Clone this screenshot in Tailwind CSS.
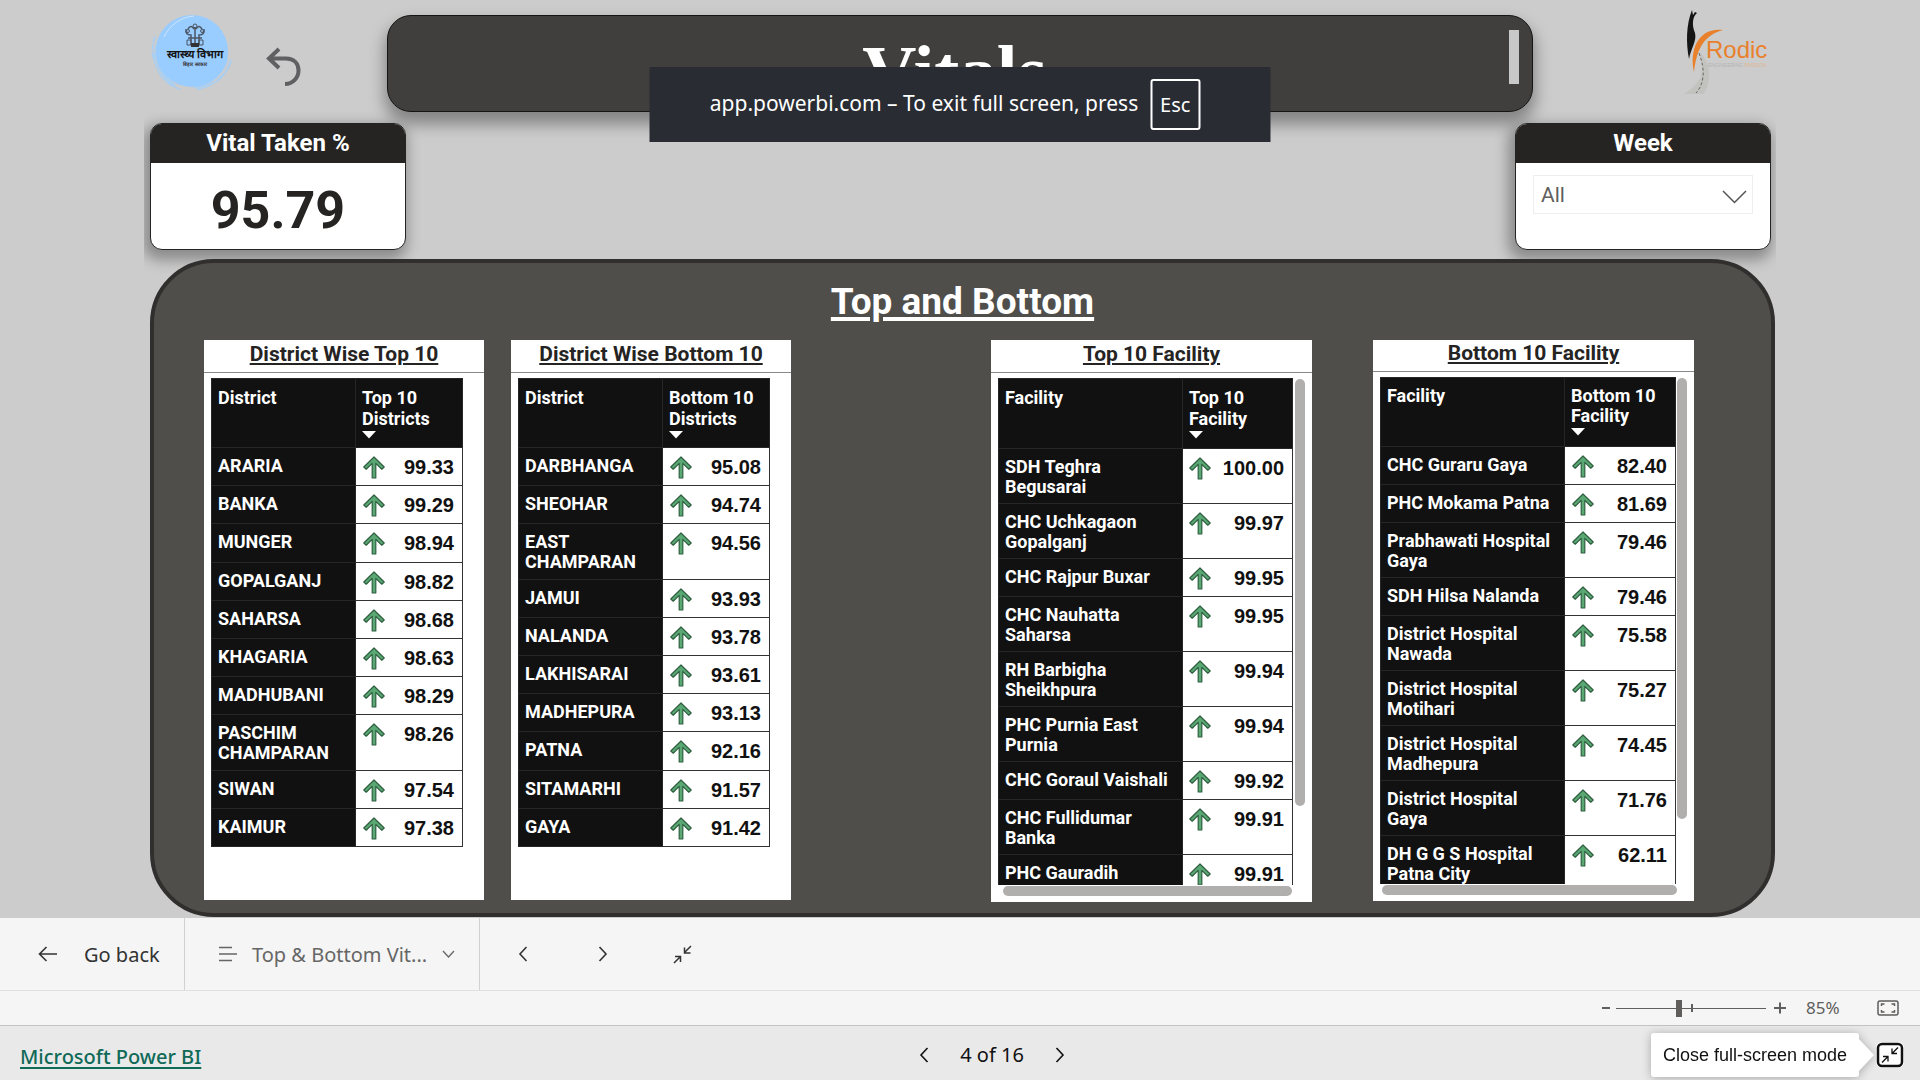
<!DOCTYPE html>
<html lang="en">
<head>
<meta charset="utf-8">
<meta name="viewport" content="width=device-width, initial-scale=1">
<title>Vitals - Microsoft Power BI</title>
<script src="https://cdn.jsdelivr.net/npm/@tailwindcss/browser@4"></script>
</head>
<body class="flex min-h-screen flex-col bg-[#cccccc] font-['Roboto',sans-serif] text-[#252423]">

<!-- shared icons -->
<svg class="hidden" aria-hidden="true">
  <symbol id="up" viewBox="0 0 22 23">
    <path d="M11 1 21.200 11 18.800 13.200 12.800 7.400V22H9.200V7.400L3.200 13.200 0.800 11Z" fill="#5aa873" stroke="#2f5f40" stroke-width="1.200" stroke-linejoin="round"/>
  </symbol>
  <symbol id="sort" viewBox="0 0 14 8"><path d="M0 0H14L7 7.500Z" fill="#fff"/></symbol>
  <symbol id="prev" viewBox="0 0 10 16"><path d="M8.500 1 2 8l6.500 7" fill="none" stroke="currentColor" stroke-width="1.600"/></symbol>
  <symbol id="next" viewBox="0 0 10 16"><path d="M1.500 1 8 8l-6.500 7" fill="none" stroke="currentColor" stroke-width="1.600"/></symbol>
</svg>

<!-- full-screen notice -->
<div role="status" class="absolute top-[67px] left-1/2 z-20 flex h-[75px] w-[621px] -translate-x-1/2 items-center justify-center gap-3 bg-[#292c33] pr-[10px] font-['Noto_Sans',sans-serif] text-[21px] text-white">
  <span class="pb-0.5 whitespace-nowrap">app.powerbi.com – To exit full screen, press</span>
  <kbd class="flex h-[51px] w-[50px] items-center justify-center rounded-[3px] border-2 border-white font-['Noto_Sans',sans-serif] text-[20px]">Esc</kbd>
</div>

<main class="mx-auto flex w-[85%] flex-1 flex-col overflow-hidden pb-px">
  <header class="flex pt-[15px]">
    <div class="flex w-[243px] shrink-0 pl-1.5">
      <svg class="-mt-1 h-[84px] w-[84px] shrink-0" viewBox="0 0 84 84" role="img" aria-label="स्वास्थ्य विभाग बिहार सरकार">
        <g fill="none" stroke="#a9cff2" stroke-linecap="round">
          <path d="M8 30C-1 50 9 72 30 78" stroke-width="1.500" stroke-dasharray="9 2"/>
          <path d="M12 22C1 44 9 64 24 74" stroke-width="3" stroke-dasharray="14 2"/>
          <path d="M5 26C2 34 2 42 4 50" stroke-width="2" stroke-dasharray="5 3"/>
          <path d="M81 50C76 64 66 74 48 78" stroke-width="2" stroke-dasharray="12 2"/>
          <path d="M77 48C72 62 62 72 46 76" stroke-width="3"/>
        </g>
        <circle cx="42" cy="40" r="36" fill="#99ccff"/>
        <path d="M14 26C20 13 32 6 44 5" fill="none" stroke="#cfe6fb"/>
        <g fill="none" stroke="#4b5563">
          <path d="M45 36V16M41 34V24q-6 0-5-6M49 34V24q6 0 5-6M38 18q3-5 6 0M46 18q3-5 6 0M38 27h14" stroke-width="1.500"/>
          <circle cx="45" cy="15" r="2"/><circle cx="38" cy="20" r="1.500"/><circle cx="52" cy="20" r="1.500"/>
          <path d="M37 29h4v5h-4zM49 29h4v5h-4z"/>
        </g>
        <path d="M41 32h8v4h-8z" fill="#333"/>
        <text x="45" y="47" text-anchor="middle" font-size="11" font-weight="700" fill="#111">स्वास्थ्य विभाग</text>
        <text x="45" y="55" text-anchor="middle" font-size="5" font-weight="700" fill="#333">बिहार सरकार</text>
      </svg>
      <button type="button" aria-label="Back" class="mt-8 ml-8 h-[40px] w-[36px] text-[#605f61]">
        <svg viewBox="0 0 36 40" class="h-[40px] w-[36px]" fill="none" stroke="currentColor" stroke-width="4"><path d="M13 2 3 11.500 13 21M3 11.500H20c8 0 12.500 5 12.500 12S27 37 19 37"/></svg>
      </button>
    </div>
    <div class="flex h-[97px] flex-1 items-start justify-center rounded-[24px] border border-[#151515] bg-[#403f3d] pt-[14px] pr-[13px] shadow-[0_10px_16px_2px_rgba(0,0,0,0.360)]">
      <h1 class="flex-1 pt-1 pl-[12px] text-center font-['Liberation_Serif',serif] text-[75px] leading-[76px] font-bold text-white">Vitals</h1>
      <div class="h-[54px] w-[10px] bg-[#c8c8c8]"></div>
    </div>
    <div class="w-[243px] shrink-0 pl-[150px]">
      <svg class="-mt-1.5 h-[88px] w-[90px]" viewBox="0 0 90 88" role="img" aria-label="Rodic">
        <path d="M9 1C3 16 3 34 6 50 8 39 14 32 12 24 9 17 9 8 14 4L12 3 10 6Z" fill="#151515"/>
        <path d="M11 63C6 40 16 18 40 21 22 26 14 38 11 63Z" fill="#e9802c"/>
        <path d="M15 42C26 62 16 76 1 85H21C31 66 25 50 15 42Z" fill="#c2c2be"/>
        <path d="M16 44C22 60 22 74 13 84" fill="none" stroke="#666" stroke-dasharray="3 2"/>
        <text x="23" y="49" font-family="Liberation Sans" font-size="24" fill="#e9802c">Rodic</text>
        <text x="25" y="58" font-family="Liberation Sans" font-size="5" fill="#b4b4b4">ENGINEERING <tspan fill="#dfb592">PASSION</tspan></text>
      </svg>
    </div>
  </header>

  <div class="flex justify-between pt-[11px] pr-[5px] pl-[6px]">
    <section class="h-[127px] w-[256px] overflow-hidden rounded-[12px] border border-[#252423] bg-white text-center shadow-[-3px_6px_14px_4px_rgba(0,0,0,0.320)]">
      <h2 class="h-[39px] bg-[#252423] text-[24px] leading-[38px] font-bold text-white">Vital Taken %</h2>
      <p class="pt-[12px] text-[52px] leading-[72px] font-bold">95.79</p>
    </section>
    <section class="h-[127px] w-[256px] overflow-hidden rounded-[12px] border border-[#252423] bg-white text-center shadow-[-3px_6px_14px_4px_rgba(0,0,0,0.320)]">
      <h2 class="h-[39px] bg-[#252423] text-[24px] leading-[38px] font-bold text-white"><label for="week">Week</label></h2>
      <div class="relative mx-[17px] mt-3">
        <select id="week" class="h-[39px] w-full appearance-none border border-[#eeeeee] bg-white pt-0.5 pl-[7px] text-[21px] text-[#605e5c]"><option>All</option></select>
        <svg class="pointer-events-none absolute top-[15px] right-[6px] h-[14px] w-[25px]" viewBox="0 0 25 14" fill="none" stroke="#555" stroke-width="1.500"><path d="M1 1 12.500 12.500 24 1"/></svg>
      </div>
    </section>
  </div>

  <section class="mt-[9px] mr-px ml-[6px] flex-1 rounded-[64px] border-4 border-[#302f2e] bg-[#4f4e4b] pb-[11px]">
    <h2 class="pt-[15px] text-center text-[37px] leading-[48px] font-bold text-white underline decoration-[4px] underline-offset-[3px]">Top and Bottom</h2>
    <div class="flex justify-between pt-[14px] pr-[77px] pl-[50px]">

      <div class="flex gap-[27px]">
        <section class="h-[560px] w-[280px] bg-white">
          <h3 class="h-[33px] border-b border-[#888] text-center text-[21px] leading-[28px] font-bold underline decoration-2 underline-offset-2">District Wise Top 10</h3>
          <table class="mt-[5px] ml-[7px] h-[469px] w-[252px] table-fixed border-collapse text-[18px] leading-[20px] [&_tbody_tr]:h-[38px] [&_td]:border [&_td]:border-[#333] [&_td]:pt-2 [&_td]:pr-2 [&_td]:pl-[7px] [&_td]:align-top [&_th]:border [&_th]:border-[#262626] [&_th]:bg-[#111] [&_th]:px-[6px] [&_th]:pt-2 [&_th]:pb-1.5 [&_th]:text-left [&_th]:align-top [&_th]:font-bold [&_th]:text-white [&_td>div]:flex [&_td>div]:justify-between [&_td>div]:font-['Liberation_Sans',sans-serif] [&_td>div]:text-[20px] [&_td>div]:leading-[22px] [&_td>div]:font-bold [&_td>div]:text-[#111] [&_td_svg]:h-[23px] [&_td_svg]:w-[22px]">
            <thead><tr class="h-[69px] leading-[21px]"><th scope="col" class="w-[144px]">District</th><th scope="col" aria-sort="descending">Top 10 Districts<svg class="mt-0.5 h-2 w-[14px]"><use href="#sort"/></svg></th></tr></thead>
            <tbody>
              <tr><th scope="row">ARARIA</th><td><div><svg><use href="#up"/></svg>99.33</div></td></tr>
              <tr><th scope="row">BANKA</th><td><div><svg><use href="#up"/></svg>99.29</div></td></tr>
              <tr><th scope="row">MUNGER</th><td><div><svg><use href="#up"/></svg>98.94</div></td></tr>
              <tr><th scope="row">GOPALGANJ</th><td><div><svg><use href="#up"/></svg>98.82</div></td></tr>
              <tr><th scope="row">SAHARSA</th><td><div><svg><use href="#up"/></svg>98.68</div></td></tr>
              <tr><th scope="row">KHAGARIA</th><td><div><svg><use href="#up"/></svg>98.63</div></td></tr>
              <tr><th scope="row">MADHUBANI</th><td><div><svg><use href="#up"/></svg>98.29</div></td></tr>
              <tr><th scope="row">PASCHIM CHAMPARAN</th><td><div><svg><use href="#up"/></svg>98.26</div></td></tr>
              <tr><th scope="row">SIWAN</th><td><div><svg><use href="#up"/></svg>97.54</div></td></tr>
              <tr><th scope="row">KAIMUR</th><td><div><svg><use href="#up"/></svg>97.38</div></td></tr>
            </tbody>
          </table>
        </section>

        <section class="h-[560px] w-[280px] bg-white">
          <h3 class="h-[33px] border-b border-[#888] text-center text-[21px] leading-[28px] font-bold underline decoration-2 underline-offset-2">District Wise Bottom 10</h3>
          <table class="mt-[5px] ml-[7px] h-[469px] w-[252px] table-fixed border-collapse text-[18px] leading-[20px] [&_tbody_tr]:h-[38px] [&_td]:border [&_td]:border-[#333] [&_td]:pt-2 [&_td]:pr-2 [&_td]:pl-[7px] [&_td]:align-top [&_th]:border [&_th]:border-[#262626] [&_th]:bg-[#111] [&_th]:px-[6px] [&_th]:pt-2 [&_th]:pb-1.5 [&_th]:text-left [&_th]:align-top [&_th]:font-bold [&_th]:text-white [&_td>div]:flex [&_td>div]:justify-between [&_td>div]:font-['Liberation_Sans',sans-serif] [&_td>div]:text-[20px] [&_td>div]:leading-[22px] [&_td>div]:font-bold [&_td>div]:text-[#111] [&_td_svg]:h-[23px] [&_td_svg]:w-[22px]">
            <thead><tr class="h-[69px] leading-[21px]"><th scope="col" class="w-[144px]">District</th><th scope="col" aria-sort="descending">Bottom 10 Districts<svg class="mt-0.5 h-2 w-[14px]"><use href="#sort"/></svg></th></tr></thead>
            <tbody>
              <tr><th scope="row">DARBHANGA</th><td><div><svg><use href="#up"/></svg>95.08</div></td></tr>
              <tr><th scope="row">SHEOHAR</th><td><div><svg><use href="#up"/></svg>94.74</div></td></tr>
              <tr><th scope="row">EAST CHAMPARAN</th><td><div><svg><use href="#up"/></svg>94.56</div></td></tr>
              <tr><th scope="row">JAMUI</th><td><div><svg><use href="#up"/></svg>93.93</div></td></tr>
              <tr><th scope="row">NALANDA</th><td><div><svg><use href="#up"/></svg>93.78</div></td></tr>
              <tr><th scope="row">LAKHISARAI</th><td><div><svg><use href="#up"/></svg>93.61</div></td></tr>
              <tr><th scope="row">MADHEPURA</th><td><div><svg><use href="#up"/></svg>93.13</div></td></tr>
              <tr><th scope="row">PATNA</th><td><div><svg><use href="#up"/></svg>92.16</div></td></tr>
              <tr><th scope="row">SITAMARHI</th><td><div><svg><use href="#up"/></svg>91.57</div></td></tr>
              <tr><th scope="row">GAYA</th><td><div><svg><use href="#up"/></svg>91.42</div></td></tr>
            </tbody>
          </table>
        </section>
      </div>

      <div class="flex gap-[61px]">
        <section class="h-[562px] w-[321px] bg-white">
          <h3 class="h-[33px] border-b border-[#888] text-center text-[21px] leading-[28px] font-bold underline decoration-2 underline-offset-2">Top 10 Facility</h3>
          <div class="mt-[5px] ml-[7px] flex gap-0.5">
            <div class="h-[507px] w-[295px] overflow-hidden">
              <table class="w-full table-fixed border-collapse text-[18px] leading-[20px] [&_tbody_tr]:h-[38px] [&_td]:border [&_td]:border-[#333] [&_td]:pt-2 [&_td]:pr-2 [&_td]:pl-[6px] [&_td]:align-top [&_th]:border [&_th]:border-[#262626] [&_th]:bg-[#111] [&_th]:pr-1 [&_th]:pl-[6px] [&_th]:pt-2 [&_th]:pb-1.5 [&_th]:text-left [&_th]:align-top [&_th]:font-bold [&_th]:text-white [&_td>div]:flex [&_td>div]:justify-between [&_td>div]:font-['Liberation_Sans',sans-serif] [&_td>div]:text-[20px] [&_td>div]:leading-[22px] [&_td>div]:font-bold [&_td>div]:text-[#111] [&_td_svg]:h-[23px] [&_td_svg]:w-[22px]">
                <thead><tr class="h-[70px] leading-[21px]"><th scope="col" class="w-[184px]">Facility</th><th scope="col" aria-sort="descending">Top 10<br>Facility<svg class="mt-0.5 h-2 w-[14px]"><use href="#sort"/></svg></th></tr></thead>
                <tbody>
                  <tr><th scope="row">SDH Teghra<br>Begusarai</th><td><div><svg><use href="#up"/></svg>100.00</div></td></tr>
                  <tr><th scope="row">CHC Uchkagaon<br>Gopalganj</th><td><div><svg><use href="#up"/></svg>99.97</div></td></tr>
                  <tr><th scope="row">CHC Rajpur Buxar</th><td><div><svg><use href="#up"/></svg>99.95</div></td></tr>
                  <tr><th scope="row">CHC Nauhatta<br>Saharsa</th><td><div><svg><use href="#up"/></svg>99.95</div></td></tr>
                  <tr><th scope="row">RH Barbigha<br>Sheikhpura</th><td><div><svg><use href="#up"/></svg>99.94</div></td></tr>
                  <tr><th scope="row">PHC Purnia East<br>Purnia</th><td><div><svg><use href="#up"/></svg>99.94</div></td></tr>
                  <tr><th scope="row">CHC Goraul Vaishali</th><td><div><svg><use href="#up"/></svg>99.92</div></td></tr>
                  <tr><th scope="row">CHC Fullidumar<br>Banka</th><td><div><svg><use href="#up"/></svg>99.91</div></td></tr>
                  <tr><th scope="row">PHC Gauradih<br>Bhagalpur</th><td><div><svg><use href="#up"/></svg>99.91</div></td></tr>
                </tbody>
              </table>
            </div>
            <div class="mt-px h-[427px] w-[10px] rounded-full bg-[#b0afad]"></div>
          </div>
          <div class="mt-px ml-[12px] h-[10px] w-[289px] rounded-full bg-[#b0afad]"></div>
        </section>

        <section class="h-[561px] w-[321px] bg-white">
          <h3 class="h-[32px] border-b border-[#888] text-center text-[21px] leading-[26px] font-bold underline decoration-2 underline-offset-2">Bottom 10 Facility</h3>
          <div class="mt-[5px] ml-[7px] flex gap-px">
            <div class="h-[507px] w-[296px] overflow-hidden">
              <table class="w-full table-fixed border-collapse text-[18px] leading-[20px] [&_tbody_tr]:h-[38px] [&_td]:border [&_td]:border-[#333] [&_td]:pt-2 [&_td]:pr-2 [&_td]:pl-[7px] [&_td]:align-top [&_th]:border [&_th]:border-[#262626] [&_th]:bg-[#111] [&_th]:pr-1 [&_th]:pl-[6px] [&_th]:pt-2 [&_th]:pb-1.5 [&_th]:text-left [&_th]:align-top [&_th]:font-bold [&_th]:text-white [&_td>div]:flex [&_td>div]:justify-between [&_td>div]:font-['Liberation_Sans',sans-serif] [&_td>div]:text-[20px] [&_td>div]:leading-[22px] [&_td>div]:font-bold [&_td>div]:text-[#111] [&_td_svg]:h-[23px] [&_td_svg]:w-[22px]">
                <thead><tr class="h-[69px] leading-[20px]"><th scope="col" class="w-[184px]">Facility</th><th scope="col" aria-sort="descending">Bottom 10<br>Facility<svg class="mt-0.5 h-2 w-[14px]"><use href="#sort"/></svg></th></tr></thead>
                <tbody>
                  <tr><th scope="row">CHC Guraru Gaya</th><td><div><svg><use href="#up"/></svg>82.40</div></td></tr>
                  <tr><th scope="row">PHC Mokama Patna</th><td><div><svg><use href="#up"/></svg>81.69</div></td></tr>
                  <tr><th scope="row">Prabhawati Hospital<br>Gaya</th><td><div><svg><use href="#up"/></svg>79.46</div></td></tr>
                  <tr><th scope="row">SDH Hilsa Nalanda</th><td><div><svg><use href="#up"/></svg>79.46</div></td></tr>
                  <tr><th scope="row">District Hospital<br>Nawada</th><td><div><svg><use href="#up"/></svg>75.58</div></td></tr>
                  <tr><th scope="row">District Hospital<br>Motihari</th><td><div><svg><use href="#up"/></svg>75.27</div></td></tr>
                  <tr><th scope="row">District Hospital<br>Madhepura</th><td><div><svg><use href="#up"/></svg>74.45</div></td></tr>
                  <tr><th scope="row">District Hospital<br>Gaya</th><td><div><svg><use href="#up"/></svg>71.76</div></td></tr>
                  <tr><th scope="row">DH G G S Hospital<br>Patna City</th><td><div><svg><use href="#up"/></svg>62.11</div></td></tr>
                </tbody>
              </table>
            </div>
            <div class="mt-px h-[441px] w-[10px] rounded-full bg-[#b0afad]"></div>
          </div>
          <div class="mt-px ml-[9px] h-[10px] w-[295px] rounded-full bg-[#b0afad]"></div>
        </section>
      </div>
    </div>
  </section>
</main>

<!-- report navigation -->
<nav class="flex h-[73px] items-stretch border-b border-[#e0e0e0] bg-[#f5f5f5] font-['Noto_Sans',sans-serif] text-[20px] text-[#333]">
  <button type="button" class="flex w-[185px] items-center gap-[26px] border-r border-[#d1d1d1] pl-[38px]">
    <svg class="h-4 w-5 shrink-0" viewBox="0 0 20 16" fill="none" stroke="currentColor" stroke-width="1.600"><path d="M8.500 1 1.500 8l7 7M1.500 8H19"/></svg>
    <span class="pt-0.5 whitespace-nowrap">Go back</span>
  </button>
  <button type="button" class="flex w-[295px] items-center border-r border-[#d1d1d1] pl-[33px] text-[#666]">
    <svg class="h-4 w-5 shrink-0" viewBox="0 0 20 16" fill="none" stroke="currentColor" stroke-width="1.500"><path d="M1 1.500H14M1 8H19M1 14.500H14"/></svg>
    <span class="w-[190px] pt-0.5 pl-[14px] text-left whitespace-nowrap">Top &amp; Bottom Vit...</span>
    <svg class="ml-[14px] h-2 w-[13px] shrink-0" viewBox="0 0 13 8" fill="none" stroke="currentColor" stroke-width="1.300"><path d="M1 1l5.500 6L12 1"/></svg>
  </button>
  <button type="button" aria-label="Previous page" class="ml-[28px] flex w-[30px] items-center justify-center"><svg class="h-4 w-[10px]"><use href="#prev"/></svg></button>
  <button type="button" aria-label="Next page" class="ml-[50px] flex w-[30px] items-center justify-center"><svg class="h-4 w-[10px]"><use href="#next"/></svg></button>
  <button type="button" aria-label="Exit full screen" class="ml-[50px] flex w-[28px] items-center justify-center">
    <svg class="h-[19px] w-[19px]" viewBox="0 0 19 19" fill="none" stroke="currentColor" stroke-width="1.500"><path d="M18 1 11.500 7.500M11.500 2.500v5.500h6M1 18l6.500-6.500M2 11.500H7.500V17"/></svg>
  </button>
</nav>

<!-- zoom strip -->
<div class="flex h-[35px] items-center justify-end border-b border-[#c3c3c3] bg-[#f5f5f5] pr-[21px] font-['Noto_Sans',sans-serif] text-[#605e5c]">
  <button type="button" aria-label="Zoom out" class="mr-[6px] flex h-5 w-2 items-center"><span class="h-[2px] w-2 bg-[#605e5c]"></span></button>
  <div class="relative flex h-5 w-[150px] items-center">
    <input type="range" aria-label="Zoom" min="0" max="100" value="42" class="h-5 w-full appearance-none bg-transparent [&::-webkit-slider-runnable-track]:h-px [&::-webkit-slider-runnable-track]:bg-[#605e5c] [&::-webkit-slider-thumb]:-mt-2 [&::-webkit-slider-thumb]:h-[17px] [&::-webkit-slider-thumb]:w-[6px] [&::-webkit-slider-thumb]:appearance-none [&::-webkit-slider-thumb]:bg-[#605e5c]">
    <span class="absolute top-1.5 left-1/2 h-2 w-[2px] bg-[#605e5c]"></span>
  </div>
  <button type="button" aria-label="Zoom in" class="ml-2 h-5 w-3"><svg viewBox="0 0 12 20" class="h-5 w-3" stroke="currentColor" stroke-width="2"><path d="M0 10h12M6 4.500v11"/></svg></button>
  <output class="ml-5 w-[36px] text-[17px]">85%</output>
  <button type="button" aria-label="Fit to page" class="ml-[35px] h-4 w-[22px]">
    <svg viewBox="0 0 22 16" class="h-4 w-[22px]" fill="none" stroke="currentColor" stroke-width="1.500"><rect x="1" y="1" width="20" height="14" rx="2"/><path d="M4.500 6V4h3M14.500 4h3v2M17.500 10v2h-3M7.500 12h-3v-2"/></svg>
  </button>
</div>

<footer class="grid h-[54px] grid-cols-[1fr_auto_1fr] items-center bg-[#e9e9e9] pt-1 pr-4 pl-5 font-['Noto_Sans',sans-serif] text-[20px] text-[#111]">
  <div class="pt-1"><a href="https://app.powerbi.com" class="font-medium text-[#0f6a58] underline decoration-2 underline-offset-[3px]">Microsoft Power BI</a></div>
  <div class="flex items-center gap-[31px] pl-[60px]">
    <button type="button" aria-label="Previous" class="h-4 w-[10px]"><svg class="h-4 w-[10px]"><use href="#prev"/></svg></button>
    <span class="whitespace-nowrap">4 of 16</span>
    <button type="button" aria-label="Next" class="h-4 w-[10px]"><svg class="h-4 w-[10px]"><use href="#next"/></svg></button>
  </div>
  <div class="relative justify-self-end">
    <button type="button" aria-describedby="tip" aria-label="Close full-screen mode" class="flex rounded-[6px] bg-white">
      <svg class="h-[26px] w-[28px]" viewBox="0 0 28 26" fill="none" stroke="#111"><rect x="2" y="2" width="24" height="22" rx="4" stroke-width="2.500"/><path d="M22 5.500 16.500 11M16 6.500V11.500h5M6 20.500l5.500-5.500M7 14.500h5V19.500" stroke-width="1.300"/></svg>
    </button>
    <div id="tip" role="tooltip" class="absolute top-1/2 right-[45px] flex h-[44px] w-[208px] -translate-y-1/2 items-center justify-center rounded-[3px] bg-white font-['Liberation_Sans',sans-serif] text-[18px] whitespace-nowrap drop-shadow-[0_1px_5px_rgba(0,0,0,0.280)]">
      Close full-screen mode
      <svg class="absolute top-[6px] left-full h-8 w-4" viewBox="0 0 16 32"><path d="M0 0 15 16 0 32Z" fill="#fff"/></svg>
    </div>
  </div>
</footer>
</body>
</html>
